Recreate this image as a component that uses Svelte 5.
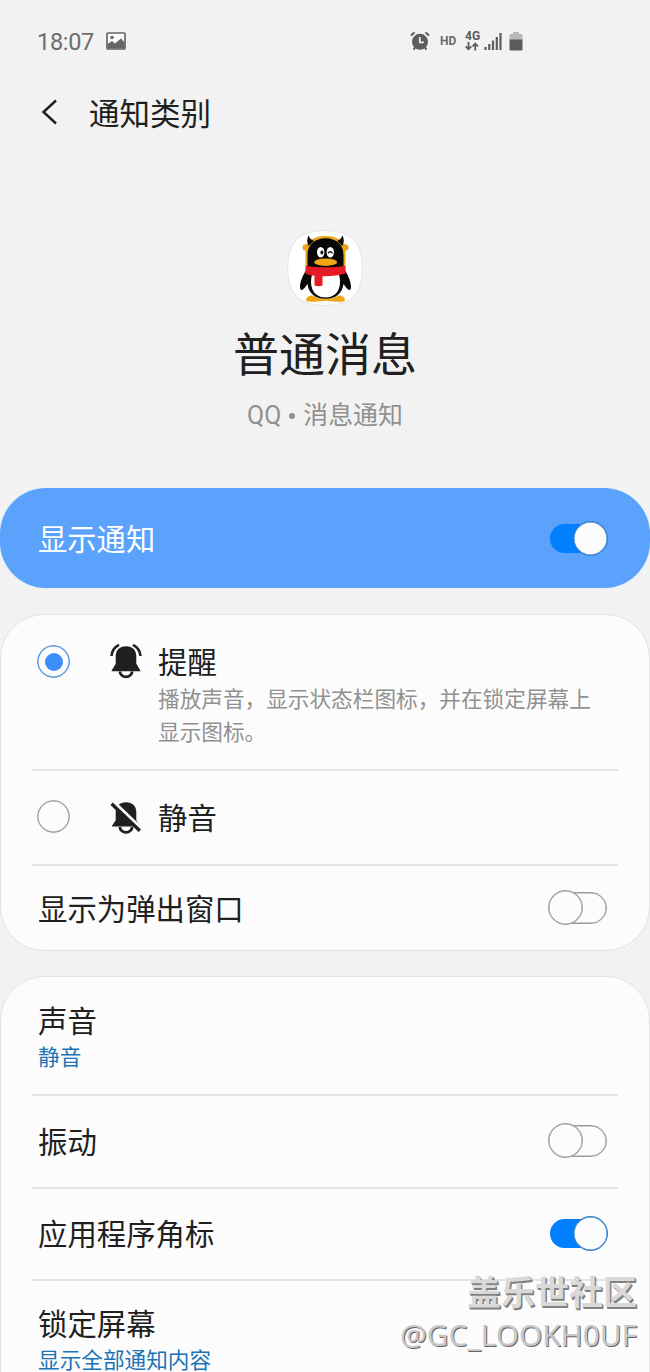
<script>
  const popup = $state({ on: false });
  let mode = $state('alert');
  let visible = $state(true);
  let vibrate = $state(false);
  let badge = $state(true);
</script>

{#snippet toggle(on, flip)}
  <button class="toggle" class:on aria-label="toggle" onclick={flip}>
    <span class="track"></span><span class="thumb"></span>
  </button>
{/snippet}

<div class="screen">
  <div class="status">
    <span class="time">18:07</span>
    <svg class="pic" width="20" height="18" viewBox="0 0 20 18">
      <rect x="1" y="1" width="18" height="16" rx="1" fill="#fafafa" stroke="#666" stroke-width="1.7" />
      <circle cx="6" cy="5.5" r="1.8" fill="#666" />
      <path d="M1.500 12 6 9l3 2.500 6-5 3.500 4v6h-17z" fill="#666" />
    </svg>
    <svg class="alarm" width="20" height="20" viewBox="0 0 20 20">
      <circle cx="10" cy="10.8" r="8" fill="#5c5c5c" />
      <path d="M1 4.500 4.500 1.300M19 4.500 15.500 1.300M5.500 16l-2 2.700M14.500 16l2 2.700" stroke="#5c5c5c" stroke-width="2" fill="none" />
      <path d="M9.800 6v5.300h4" stroke="#f2f2f2" stroke-width="1.700" fill="none" />
    </svg>
    <span class="hd">HD</span>
    <div class="net">
      <span>4G</span>
      <svg width="14" height="9" viewBox="0 0 14 9">
        <path d="M3.500 0v7M.7 4.300l2.800 3 2.800-3M10.200 8.500v-7M7.400 4.500l2.800-3 2.800 3" fill="none" stroke="#5c5c5c" stroke-width="1.800" />
      </svg>
    </div>
    <svg class="signal" width="18" height="18" viewBox="0 0 18 18">
      <path d="M1.500 18v-3M5.300 18v-6M9 18V8.500M12.800 18V5M16.500 18V1" stroke="#5c5c5c" stroke-width="2.200" />
    </svg>
    <svg class="battery" width="14" height="20" viewBox="0 0 14 20">
      <path d="M4 1h6v2h2.500q1 0 1 1v5H.5V4q0-1 1-1H4z" fill="#b9b9b9" />
      <path d="M.5 8.500h13v10q0 1-1 1h-11q-1 0-1-1z" fill="#5c5c5c" />
    </svg>
  </div>

  <header>
    <svg width="17" height="26" viewBox="0 0 17 26">
      <path d="M15 1.500 2.500 13 15 24.500" fill="none" stroke="#1e1e1e" stroke-width="2.400" />
    </svg>
    <h1>通知类别</h1>
  </header>

  <section class="hero">
    <svg class="app-icon" width="76" height="76" viewBox="0 0 76 76">
      <path d="M38 .7C64 .7 75.300 12 75.300 38S64 75.300 38 75.300.7 64 .7 38 12 .7 38 .7z" fill="#fff" stroke="#e4e4e4" />
      <path d="M18.500 37V20.500c-2 .5-3.300-1-3-3.500.3-2.200 2-3 4.500-3C24 8.500 30 6 38.500 6S53 8.500 57 14c2.500 0 4.200.8 4.500 3 .3 2.500-1 4-3 3.500V37z" fill="#eaa51c" />
      <path d="M21.500 5.500q-2.500 5 0 10.500l5.500-5q-4-1.500-5.500-5.500zM55.500 5.500q2.500 5 0 10.500L50 11q4-1.500 5.500-5.500z" fill="#080808" />
      <path d="M38.500 8.300C28 8.300 20.500 14.500 20.500 25v13c-4 6-7.500 13-7.500 19 0 3.500 2 4 4.500 1l3-4c1 9 8 15 18 15s17-6 18-15l3 4c2.500 3 4.500 2.500 4.500-1 0-6-3.500-13-7.500-19V25c0-10.500-7.500-16.700-18-16.700z" fill="#080808" />
      <path d="M25.500 43c-4 12 0 24.500 13 24.500s17-12.500 13-24.500z" fill="#fff" />
      <path d="M19 70c0-2.500 3-4.500 6.500-4.500 4 2.500 8 3.300 13 3.300s9-.8 13-3.300c3.500 0 6.500 2 6.500 4.500 0 2-5 2-9 1.800-3.500 0-7-1-10.500-1s-7 1-10.500 1c-4 .2-9 .2-9-1.800z" fill="#f0a716" />
      <path d="M18.500 36q20 2.500 40 0v7.500q-10 3-23 2.700V55.500q-4 1.500-8 0V45.800q-5.500-.6-9-2.300z" fill="#e51b25" />
      <ellipse cx="38.700" cy="32.200" rx="11.500" ry="3.700" fill="#f0a716" />
      <ellipse cx="33.700" cy="22.300" rx="3.700" ry="5.300" fill="#fff" />
      <ellipse cx="43.300" cy="22.300" rx="3.700" ry="5.300" fill="#fff" />
      <ellipse cx="34.900" cy="22.600" rx="1.500" ry="2" fill="#111" />
      <path d="M41 23.200q2.300-2.800 4.600 0" fill="none" stroke="#111" stroke-width="1.400" />
    </svg>
    <h2>普通消息</h2>
    <p>QQ <i></i> 消息通知</p>
  </section>

  <div class="master">
    <span>显示通知</span>
    {@render toggle(visible, () => (visible = !visible))}
  </div>

  <div class="card modes">
    <div class="row alert">
      <button class="radio" class:checked={mode === 'alert'} aria-label="alert" onclick={() => (mode = 'alert')}></button>
      <svg class="bell" width="34" height="36" viewBox="0 0 34 36">
        <path d="M17 3.200c-6.800 0-10.300 4.300-10.300 10v7.500L2.700 27.500v.8h28.600v-.8l-4-6.800v-7.500c0-5.700-3.500-10-10.300-10z" fill="#202020" />
        <path d="M10.900 28.500a6.100 5.300 0 0 0 12.200 0" fill="none" stroke="#202020" stroke-width="2.800" />
        <path d="M2.500 13C3 7.500 5.500 4 10 1.800M31.500 13C31 7.500 28.500 4 24 1.800" fill="none" stroke="#202020" stroke-width="2.600" />
      </svg>
      <div class="text">
        <b>提醒</b>
        <small>播放声音，显示状态栏图标，并在锁定屏幕上<br />显示图标。</small>
      </div>
    </div>
    <div class="row silent">
      <button class="radio" class:checked={mode === 'silent'} aria-label="silent" onclick={() => (mode = 'silent')}></button>
      <svg class="bell" width="34" height="36" viewBox="0 0 34 36">
        <path d="M17 2.200c-6.800 0-10.300 4.300-10.300 10v8L2.900 26v.6h28.200V26l-3.800-5.800v-8c0-5.700-3.500-10-10.300-10z" fill="#202020" />
        <path d="M10.900 27a6.100 5.300 0 0 0 12.200 0" fill="none" stroke="#202020" stroke-width="2.800" />
        <path d="M2.500 0 34 30.300" stroke="#fcfcfc" stroke-width="3.500" />
        <path d="M2.600 3.700 30.800 30.800" stroke="#202020" stroke-width="3.300" />
      </svg>
      <b>静音</b>
    </div>
    <div class="row popup">
      <b>显示为弹出窗口</b>
      {@render toggle(popup.on, () => (popup.on = !popup.on))}
    </div>
  </div>

  <div class="card last">
    <div class="row sound">
      <div class="text"><b>声音</b><small>静音</small></div>
    </div>
    <div class="row vib">
      <b>振动</b>
      {@render toggle(vibrate, () => (vibrate = !vibrate))}
    </div>
    <div class="row badge">
      <b>应用程序角标</b>
      {@render toggle(badge, () => (badge = !badge))}
    </div>
    <div class="row lock">
      <div class="text"><b>锁定屏幕</b><small>显示全部通知内容</small></div>
    </div>
  </div>

  <div class="watermark">
    <strong>盖乐世社区</strong>
    <span>@GC_LOOKH0UF</span>
  </div>
</div>

<style>
  :global(body) { background: #f2f2f2; }
  * { box-sizing: border-box; margin: 0; }
  .screen {
    position: relative;
    width: 650px;
    height: 1372px;
    overflow: hidden;
    background: #f2f2f2;
    color: #202020;
    font-family: Roboto, "Noto Sans CJK SC", sans-serif;
  }
  svg { display: block; flex: none; }
  button { appearance: none; border: 0; background: none; padding: 0; flex: none; }
  .status { display: flex; align-items: center; height: 82px; padding-left: 37px; color: #5c5c5c; }
  .time { width: 69px; padding-top: 1px; font-size: 23.500px; line-height: 28px; letter-spacing: -.3px; color: #6c6c6c; }
  .alarm { margin-left: 284px; }
  .hd { width: 25px; margin-left: 10px; font-size: 12px; font-weight: 700; color: #6a6a6a; }
  .net { display: flex; flex-direction: column; width: 17px; height: 20px; font-size: 12px; line-height: 11px; font-weight: 700; }
  .signal { margin-left: 2px; }
  .battery { margin-left: 7px; }
  header { display: flex; align-items: center; height: 62px; padding-left: 41px; }
  header svg { margin-top: -2px; }
  h1 { margin-left: 31px; padding-top: 3px; font-size: 30.500px; line-height: 40px; font-weight: 400; }
  .hero { display: flex; flex-direction: column; align-items: center; height: 344px; padding-top: 86px; }
  h2 { margin-top: 18px; font-size: 46px; line-height: 62px; font-weight: 400; }
  .hero p { display: flex; align-items: center; margin-top: 13px; gap: 8px; font-size: 24.900px; line-height: 34px; color: #909090; }
  .hero i { width: 6px; height: 6px; border-radius: 50%; background: #909090; }
  .master {
    display: flex; align-items: center; justify-content: space-between;
    height: 100px; padding: 0 42px 0 38px; border-radius: 46px;
    background: #5aa2fb; color: #fff; font-size: 29.300px; box-shadow: 0 0 1px 1px #e4eefa;
  }
  .master span { margin-top: -2px; }
  .master .toggle span { margin-top: 0; }
  .card { height: 337px; margin-top: 26px; padding: 0 31px; border: 1px solid #e2e2e2; border-radius: 44px; background: #fcfcfc; }
  .card.last { height: 450px; margin-top: 25px; border-radius: 44px 44px 0 0; }
  .row { display: flex; align-items: center; justify-content: space-between; padding: 0 10px 0 6px; border-bottom: 2px solid #e3e3e3; }
  .row b { font-size: 29.400px; line-height: 40px; font-weight: 400; }
  .row:last-child { border: 0; }
  .text { display: flex; flex-direction: column; }
  .text small { font-size: 21.650px; line-height: 33px; color: #909090; white-space: nowrap; }
  .alert { height: 156px; align-items: flex-start; justify-content: flex-start; padding: 28px 0 0 5px; }
  .alert .radio { margin-top: 2px; }
  .alert .text { margin-left: 15px; }
  .silent { height: 95px; justify-content: flex-start; padding-left: 5px; }
  .silent .radio { margin-top: -2px; }
  .silent b { margin-left: 15px; padding-top: 2px; }
  .bell { margin-left: 39px; }
  .popup { height: 84px; }
  .popup b { padding-top: 3px; }
  .sound { height: 119px; align-items: flex-start; padding-top: 25px; }
  .sound small, .lock small { color: #1a73b5; }
  .sound small { margin-top: -1px; }
  .vib { height: 93px; }
  .vib b { padding-top: 2px; }
  .badge { height: 92px; }
  .badge b { padding-top: 2px; }
  .lock { align-items: flex-start; padding-top: 24px; }
  .lock small { margin-top: -1px; }
  .radio { display: grid; place-items: center; width: 33px; height: 33px; border: 1.500px solid #999; border-radius: 50%; box-shadow: inset 0 0 0 .500px #999; }
  .radio.checked { border-color: #4a8fd8; box-shadow: inset 0 0 0 .500px #4a8fd8; }
  .radio.checked::after { content: ""; width: 18px; height: 18px; border-radius: 50%; background: #3c8ffb; }
  .toggle { position: relative; width: 60px; height: 35px; }
  .row .toggle { margin-top: -2px; }
  .track { position: absolute; inset: 2px 1px 1px 3px; border: 1px solid #999; border-radius: 16px; box-shadow: inset 0 0 0 .500px #999; }
  .thumb { position: absolute; left: 0; top: 0; width: 35px; height: 35px; border: 1px solid #999; border-radius: 50%; background: #fcfcfc; box-shadow: inset 0 0 0 .500px #999; }
  .on .track { inset: 3px 2px 3px 2px; border: 0; background: #007fff; box-shadow: none; }
  .on .thumb { left: 25px; border-color: #1e74cc; box-shadow: inset 0 0 0 .500px #1e74cc; }
  .watermark {
    position: absolute; right: 13px; top: 1268px;
    display: flex; flex-direction: column; align-items: flex-end;
    color: #d9d9d9; white-space: nowrap;
  }
  .watermark strong { font: 700 34px/46px "Noto Sans CJK SC", sans-serif; text-shadow: 1px 1px #808080, 1.500px 1.500px #808080; }
  .watermark span { font: 400 29.800px/42px "Noto Sans", sans-serif; color: #c8c8c8; text-shadow: 1px 1px #666; }
</style>
